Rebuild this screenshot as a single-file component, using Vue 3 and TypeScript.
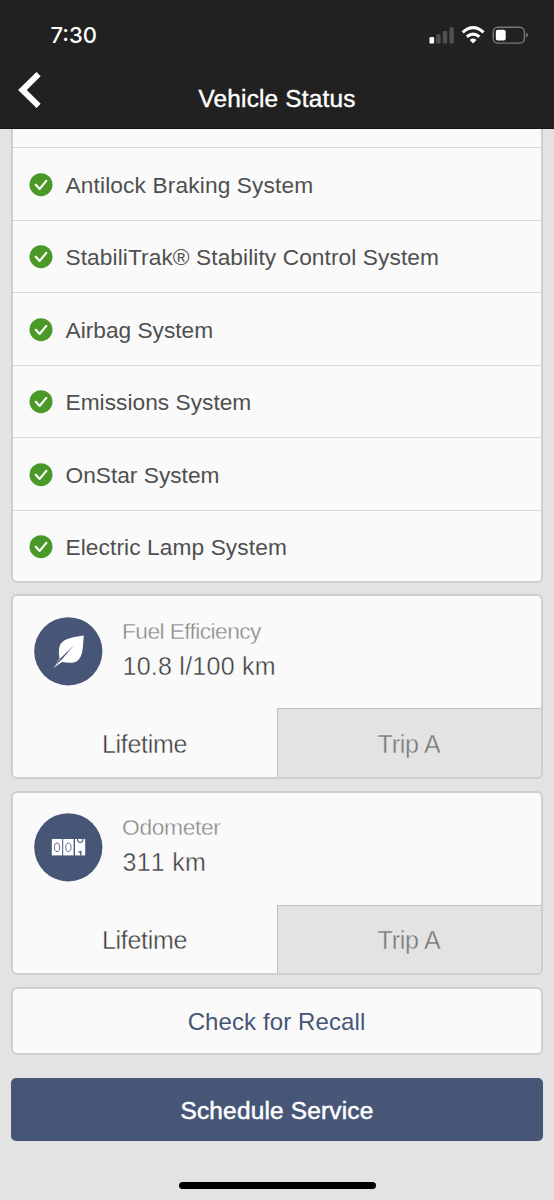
<script setup lang="ts">
interface Metric {
  id: 'fuel' | 'odometer'
  label: string
  value: string
}

const systems: { name: string; cls: string }[] = [
  { name: 'Antilock Braking System', cls: 'abs' },
  { name: 'StabiliTrak® Stability Control System', cls: 'stability' },
  { name: 'Airbag System', cls: 'airbag' },
  { name: 'Emissions System', cls: 'emissions' },
  { name: 'OnStar System', cls: 'onstar' },
  { name: 'Electric Lamp System', cls: 'lamp' },
]

const metrics: Metric[] = [
  { id: 'fuel', label: 'Fuel Efficiency', value: '10.8 l/100 km' },
  { id: 'odometer', label: 'Odometer', value: '311 km' },
]
</script>

<template>
  <div class="screen">
    <header class="header">
      <div class="status-bar">
        <span class="clock">7:30</span>
        <svg class="status-icons" width="100" height="20" viewBox="0 0 100 20" aria-hidden="true">
          <rect x="0.5" y="12" width="4.6" height="6.6" rx="1.2" fill="#fff" />
          <rect x="7.2" y="9.3" width="4.4" height="9.3" rx="1.2" fill="#505050" />
          <rect x="13.8" y="5.9" width="4.4" height="12.7" rx="1.2" fill="#505050" />
          <rect x="20.4" y="2.3" width="4.4" height="16.3" rx="1.2" fill="#505050" />
          <g fill="none" stroke="#fff" stroke-width="3.2">
            <path d="M33.7 7.4 Q44.1 -2 54.5 7.4" />
            <path d="M37.9 11.8 Q44.1 6.4 50.3 11.8" />
          </g>
          <path d="M40.7 15 Q44.1 12.1 47.5 15 L44.1 18.4Z" fill="#fff" />
          <rect x="64.2" y="2.2" width="31.2" height="15.9" rx="4.6" fill="none" stroke="#777" stroke-width="1.4" />
          <rect x="66.8" y="4.8" width="9.9" height="10.8" rx="2" fill="#fff" />
          <path d="M97.1 7.6 Q99 8.4 99 10.1 Q99 11.9 97.1 12.7Z" fill="#777" />
        </svg>
      </div>
      <div class="nav">
        <svg class="back" width="24" height="38" viewBox="0 0 24 38" aria-label="Back">
          <path d="M21.6 3.2 L5.4 19 L21.6 34.8" fill="none" stroke="#fff" stroke-width="6" />
        </svg>
        <h1 class="title">Vehicle Status</h1>
      </div>
    </header>

    <main class="content">
      <ul class="card systems">
        <li v-for="s in systems" :key="s.name" class="system">
          <svg class="check" width="24" height="24" viewBox="0 0 24 24" aria-hidden="true">
            <circle cx="12" cy="11.7" r="11.5" fill="#4a9928" />
            <path d="M6.7 11.8 L10.7 15.9 L17.3 7.9" fill="none" stroke="#fff" stroke-width="2.2" stroke-linecap="round" stroke-linejoin="round" />
          </svg>
          <span :class="['system-name', s.cls]">{{ s.name }}</span>
        </li>
      </ul>

      <section v-for="m in metrics" :key="m.id" :class="['card', 'metric', m.id]">
        <div class="summary">
          <svg v-if="m.id === 'fuel'" class="badge" width="69" height="69" viewBox="0 0 69 69" aria-hidden="true">
            <circle cx="34.3" cy="34.3" r="34.1" fill="#475677" />
            <path d="M49.8 18.4 C42 19.8 32 20.4 27.2 26.2 C24.4 29.6 24.8 35 25.4 40.8 L19.4 50.9 L28 45 C34 46.2 41 46.8 44.8 42.4 C49.8 36.3 48.8 26 49.8 18.4Z" fill="#fff" />
            <path d="M40 28.2 L26 41.8 L20.6 49.2 L27.8 42.6 Z" fill="#475677" />
            <path d="M25.2 41.2 L19.6 50.6" stroke="#475677" stroke-width="0.9" />
          </svg>
          <svg v-else class="badge" width="69" height="69" viewBox="0 0 69 69" aria-hidden="true">
            <circle cx="34.3" cy="34.3" r="34.1" fill="#475677" />
            <g fill="#fff">
              <rect x="17.8" y="26" width="10.4" height="16.4" />
              <rect x="29.2" y="26" width="10.4" height="16.4" />
              <rect x="41" y="26" width="10.2" height="16.4" />
            </g>
            <g fill="none" stroke="#475677" stroke-width="0.9">
              <ellipse cx="23" cy="34.3" rx="2.6" ry="4.3" />
              <ellipse cx="34.4" cy="34.3" rx="2.6" ry="4.3" />
              <path d="M43.5 26 Q43.7 29.5 46.2 29.5 Q48.8 29.5 49 26" stroke-width="1.1" />
              <path d="M44.6 39.4 L46.8 38.5 V42.4" stroke-width="1.3" />
            </g>
          </svg>
          <div class="reading">
            <span class="label">{{ m.label }}</span>
            <span class="value">{{ m.value }}</span>
          </div>
        </div>
        <div class="tabs">
          <div class="tab"><span>Lifetime</span></div>
          <div class="tab idle"><span>Trip A</span></div>
        </div>
      </section>

      <button class="card recall"><span>Check for Recall</span></button>
      <button class="schedule"><span>Schedule Service</span></button>
    </main>
    <div class="home-bar"></div>
  </div>
</template>

<style>
html,
body {
  margin: 0;
  background: #e3e3e3;
}
</style>

<style scoped>
.screen {
  width: 554px;
  height: 1200px;
  overflow: hidden;
  display: flex;
  flex-direction: column;
  background: #e3e3e3;
  font-family: 'Liberation Sans', Arial, sans-serif;
  box-sizing: border-box;
}
.screen * {
  box-sizing: border-box;
}
span {
  white-space: nowrap;
}
.header {
  height: 129px;
  flex: none;
  background: #212121;
  border-bottom: 1px solid #161616;
  color: #fff;
}
.status-bar {
  height: 70px;
  padding: 0 25px 0 50.5px;
  display: flex;
  justify-content: space-between;
  align-items: center;
}
.clock {
  font: 500 22px/30px Inter, sans-serif;
}
.nav {
  display: grid;
  grid-template-columns: 60px 1fr 60px;
  height: 58px;
}
.back {
  margin: 1px 0 0 17px;
}
.title {
  margin: 14px 0 0;
  text-align: center;
  font-size: 24.4px;
  line-height: 30px;
  font-weight: 400;
  letter-spacing: 0.18px;
  -webkit-text-stroke: 0.4px #fff;
}
.content {
  display: flex;
  flex-direction: column;
  padding: 0 11px;
}
.card {
  background: #fafafa;
  border: 2px solid #cecece;
  border-radius: 6px;
  margin: 0;
}
.systems {
  list-style: none;
  padding: 18px 0 0;
  height: 454px;
  border-top: 0;
  border-radius: 0 0 6px 6px;
}
.system {
  height: 72.5px;
  border-top: 1px solid #d9d9d9;
  display: flex;
  align-items: center;
  padding: 2px 0 0 16px;
}
.check {
  flex: none;
}
.system-name {
  margin: 0 0 0 12.5px;
  font-size: 22.7px;
  line-height: 30px;
  color: #4f4f4f;
}
.abs {
  letter-spacing: 0.14px;
}
.stability {
  letter-spacing: 0.09px;
}
.airbag,
.onstar {
  letter-spacing: 0.01px;
}
.emissions {
  letter-spacing: 0.03px;
}
.lamp {
  letter-spacing: 0.1px;
}
.metric {
  margin-top: 12px;
  height: 184px;
  display: flex;
  flex-direction: column;
  overflow: hidden;
}
.fuel {
  margin-top: 11px;
  height: 185px;
}
.summary {
  height: 112px;
  padding: 21px 0 0 21px;
  display: flex;
}
.odometer .summary {
  padding-top: 20px;
}
.reading {
  display: flex;
  flex-direction: column;
  margin: -1px 0 0 19px;
}
.label {
  font-size: 22.8px;
  line-height: 30px;
  color: #858585;
  letter-spacing: -0.6px;
  -webkit-text-stroke: 0.4px #fafafa;
}
.odometer .label {
  letter-spacing: -0.35px;
}
.value {
  font-size: 25px;
  line-height: 34px;
  margin-top: 3px;
  padding-left: 0.5px;
  color: #3a3a3a;
  letter-spacing: 0.25px;
  font-kerning: none;
  -webkit-text-stroke: 0.4px #fafafa;
}
.tabs {
  flex: 1;
  display: grid;
  grid-template-columns: 264px 1fr;
}
.tab {
  display: flex;
  align-items: center;
  justify-content: center;
  padding: 3px 1px 0 0;
  font-size: 25px;
  letter-spacing: -0.3px;
  color: #3a3a3a;
  -webkit-text-stroke: 0.4px #fafafa;
}
.idle {
  padding-top: 2px;
  background: #e3e3e3;
  border-top: 1.5px solid #c0c0c0;
  border-left: 1.5px solid #c0c0c0;
  color: #757575;
  letter-spacing: -0.25px;
  -webkit-text-stroke: 0.4px #e3e3e3;
}
.recall {
  margin-top: 12px;
  height: 68px;
  padding: 2px 1px 0 0;
  color: #475677;
  font-family: inherit;
  font-size: 24px;
  letter-spacing: 0.1px;
}
.schedule {
  margin-top: 23px;
  height: 63px;
  padding: 2px 0 0;
  border: 0;
  border-radius: 5px;
  background: #475677;
  color: #fff;
  font-family: inherit;
  font-size: 24.4px;
  letter-spacing: 0.2px;
  -webkit-text-stroke: 0.5px #fff;
}
.home-bar {
  margin: 41px auto 0 178.5px;
  width: 197.5px;
  height: 7px;
  border-radius: 4px;
  background: #000;
}
</style>
